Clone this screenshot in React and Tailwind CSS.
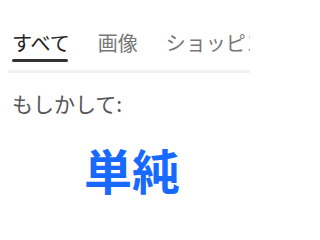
export default function App() {
    const tabs = ["すべて", "画像", "ショッピング"];

    return (
        <div
            className="h-[224px] w-[259px] overflow-hidden bg-white"
            style={{ fontFamily: '"Noto Sans CJK JP", "Noto Sans", sans-serif' }}
        >
            <div className="w-[250px] overflow-hidden pt-[29px]">
                <div className="flex gap-[28px] whitespace-nowrap pl-3">
                    {tabs.map((tab, i) => (
                        <div key={tab} className="flex flex-col">
                            <span
                                className={
                                    i === 0
                                        ? "text-[20px] leading-[28px] text-[#222]"
                                        : "text-[20px] leading-[28px] text-[#777]"
                                }
                            >
                                {tab}
                            </span>
                            {i === 0 ? (
                                <div className="mt-[2px] mr-[2px] h-[3px] rounded-full bg-[#333]"></div>
                            ) : null}
                        </div>
                    ))}
                </div>
                <div className="ml-2 mt-[8px] h-[3px] bg-[#f1f1f1]"></div>
            </div>

            <p className="mt-[16px] pl-3 text-[21px] leading-[28px] text-[#555]">
                もしかして:
            </p>

            <div className="mt-[24px] flex justify-center pl-[5px]">
                <span className="text-[48px] font-bold leading-[56px] text-[#1769ff]">
                    単純
                </span>
            </div>
        </div>
    );
}
